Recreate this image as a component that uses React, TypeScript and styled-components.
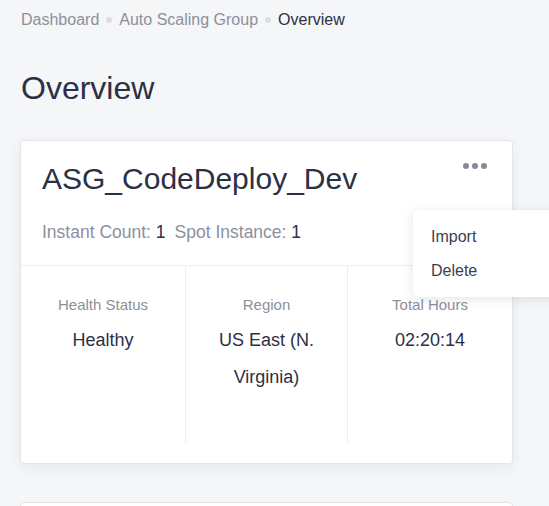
import React from 'react';
import styled, { createGlobalStyle } from 'styled-components';

const GlobalStyle = createGlobalStyle`
  html, body { margin: 0; padding: 0; background: #f5f6f8; overflow: hidden; }
  body { font-family: "Liberation Sans", Arial, sans-serif; color: #2c3045; }
`;

const Page = styled.div`
  padding: 10px 36px 0 20px;
  min-height: 506px;
  box-sizing: border-box;
`;

const Crumbs = styled.nav`
  display: flex; align-items: center; gap: 7px; padding-left: 1px;
  font-size: 16px; line-height: 20px; color: #8c909d;
`;

const Crumb = styled.span<{ $active?: boolean }>`
  color: ${p => (p.$active ? '#2c3045' : '#8c909d')};
`;

const Dot = styled.span`
  width: 6px; height: 6px; border-radius: 50%; background: #dcdde1;
`;

const Heading = styled.h1`
  margin: 38px 0 32px 1px; font-size: 32px; font-weight: 400; line-height: 40px; color: #2c3045;
`;

const Card = styled.section`
  position: relative;
  background: #fff; border: 1px solid #e3e5e9; border-radius: 4px;
  box-shadow: 0 4px 14px rgba(30, 40, 60, 0.06);
  margin-bottom: 38px;
`;

const CardHead = styled.div`
  padding: 19px 25px 21px 21px;
  display: flex; justify-content: space-between; align-items: flex-start;
`;

const Title = styled.h2`
  margin: 0; font-size: 30px; font-weight: 400; line-height: 38px; color: #2c3045;
`;

const Meta = styled.div`
  margin-top: 22px; font-size: 17.5px; line-height: 24px; color: #8c909d;
  b { font-weight: 400; color: #2c3045; }
  span + span { margin-left: 9px; }
`;

const MoreButton = styled.button`
  border: 0; background: none; padding: 4px 0; margin-top: -1px; cursor: pointer;
  display: flex; gap: 3px;
  i { width: 6px; height: 6px; border-radius: 50%; background: #868b99; }
`;

const Stats = styled.div`
  display: grid; grid-template-columns: 165px 162px 1fr;
  border-top: 1px solid #eceef1;
  padding-bottom: 20px;
`;

const Stat = styled.div<{ $last?: boolean }>`
  border-right: ${p => (p.$last ? 'none' : '1px solid #eceef1')};
  padding: 30px 12px 0; min-height: 147px;
  text-align: center;
`;

const StatLabel = styled.div`
  font-size: 15px; line-height: 18px; color: #8c909d;
`;

const StatValue = styled.div`
  margin-top: 8px; font-size: 18px; line-height: 37px; color: #2c3045;
`;

const Menu = styled.ul`
  position: absolute; top: 69px; left: 392px; width: 160px;
  margin: 0; padding: 10px 0 9px; list-style: none;
  background: #fff; border-radius: 6px;
  box-shadow: 0 2px 12px rgba(30, 40, 60, 0.12);
`;

const MenuItem = styled.li`
  padding: 0 18px; font-size: 16px; line-height: 34px; color: #3a3e52; cursor: pointer;
`;

const NextCard = styled.section`
  background: #fff; border: 1px solid #e3e5e9; border-radius: 4px; height: 60px;
`;

export default function App() {
  return (
    <>
      <GlobalStyle />
      <Page>
        <Crumbs>
          <Crumb>Dashboard</Crumb>
          <Dot />
          <Crumb>Auto Scaling Group</Crumb>
          <Dot />
          <Crumb $active>Overview</Crumb>
        </Crumbs>
        <Heading>Overview</Heading>
        <Card>
          <CardHead>
            <div>
              <Title>ASG_CodeDeploy_Dev</Title>
              <Meta>
                <span>Instant Count: <b>1</b></span>
                <span>Spot Instance: <b>1</b></span>
              </Meta>
            </div>
            <MoreButton aria-label="More actions"><i /><i /><i /></MoreButton>
          </CardHead>
          <Stats>
            <Stat>
              <StatLabel>Health Status</StatLabel>
              <StatValue>Healthy</StatValue>
            </Stat>
            <Stat>
              <StatLabel>Region</StatLabel>
              <StatValue>US East (N. Virginia)</StatValue>
            </Stat>
            <Stat $last>
              <StatLabel>Total Hours</StatLabel>
              <StatValue>02:20:14</StatValue>
            </Stat>
          </Stats>
          <Menu>
            <MenuItem>Import</MenuItem>
            <MenuItem>Delete</MenuItem>
          </Menu>
        </Card>
        <NextCard />
      </Page>
    </>
  );
}
